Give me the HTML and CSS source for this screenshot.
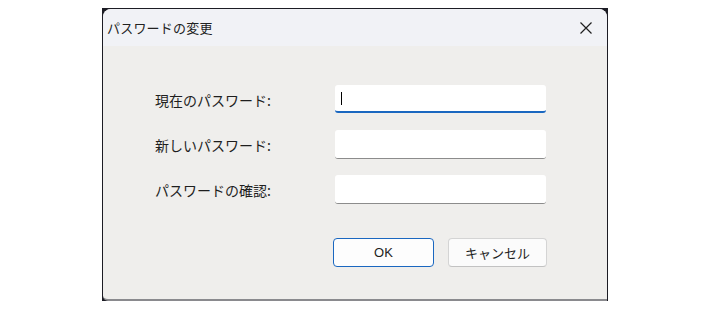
FILE: index.html
```html
<!DOCTYPE html>
<html lang="ja">
<head>
  <meta charset="UTF-8">
  <title>パスワードの変更</title>
  <link rel="stylesheet" href="styles.css">
</head>
<body>
  <!-- Dialog window -->
  <div class="window">
    <div class="window-inner">
      <div class="title-bar">
        <span class="title">パスワードの変更</span>
        <svg class="close" width="12" height="12" viewBox="0 0 12 12">
          <path d="M0.5 0.5 L11.5 11.5 M11.5 0.5 L0.5 11.5" stroke="#1f1f1f" stroke-width="1.2" fill="none"/>
        </svg>
      </div>

      <div class="content">
        <div class="form-grid">
          <label>現在のパスワード:</label>
          <div class="field focused"><span class="caret"></span></div>

          <label>新しいパスワード:</label>
          <div class="field"></div>

          <label>パスワードの確認:</label>
          <div class="field"></div>
        </div>

        <div class="buttons">
          <button class="btn btn-default">OK</button>
          <button class="btn">キャンセル</button>
        </div>
      </div>
    </div>
  </div>
</body>
</html>
```

FILE: styles.css
```css
* {
  margin: 0;
  padding: 0;
  box-sizing: border-box;
}

body {
  background-color: #fff;
  font-family: 'Noto Sans CJK JP', 'Noto Sans', sans-serif;
  color: #1e1e1e;
}

/* Window frame */
.window {
  margin: 8px 0 0 102px;
  width: 506px;
  height: 293px;
  background-color: #1c1c24;
  padding: 1px 1px 0 1px;
}

.window-inner {
  height: 100%;
  background-color: #efeeec;
  border-radius: 8px 8px 0 5px;
  border-bottom: 2px solid #8a8a8e;
  overflow: hidden;
}

/* Title bar */
.title-bar {
  height: 37px;
  background-color: #f1f2f6;
  display: flex;
  align-items: center;
  justify-content: space-between;
  padding: 0 15px 0 4px;
}

.title {
  font-size: 13px;
  letter-spacing: 0.2px;
  color: #222;
}

/* Form area */
.content {
  padding: 39px 0 0 52px;
  width: 444px;
}

.form-grid {
  display: grid;
  grid-template-columns: 180px 211px;
  grid-auto-rows: 29px;
  row-gap: 16px;
  align-items: center;
}

.form-grid label {
  font-size: 14px;
  color: #1e1e1e;
}

.field {
  height: 29px;
  background-color: #fff;
  border-radius: 3px;
  border-bottom: 1px solid #8c8c8c;
  display: flex;
  align-items: center;
  padding-left: 6px;
}

.field.focused {
  height: 28px;
  align-self: start;
  border-bottom: 2px solid #1a67c0;
}

.caret {
  width: 1px;
  height: 13px;
  background-color: #000;
}

/* Buttons */
.buttons {
  display: flex;
  justify-content: flex-end;
  gap: 14px;
  margin-top: 34px;
}

.btn {
  width: 99px;
  height: 29px;
  background-color: #fbfbfb;
  border: 1px solid #d4d4d4;
  border-bottom-color: #c2c2c2;
  border-radius: 4px;
  font-family: 'Noto Sans CJK JP', 'Noto Sans', sans-serif;
  font-size: 13px;
  color: #1e1e1e;
}

.btn-default {
  width: 101px;
  background-color: #fdfdfd;
  border: 1.5px solid #1a67c0;
  font-family: 'Liberation Sans', 'Noto Sans CJK JP', sans-serif;
}
```
